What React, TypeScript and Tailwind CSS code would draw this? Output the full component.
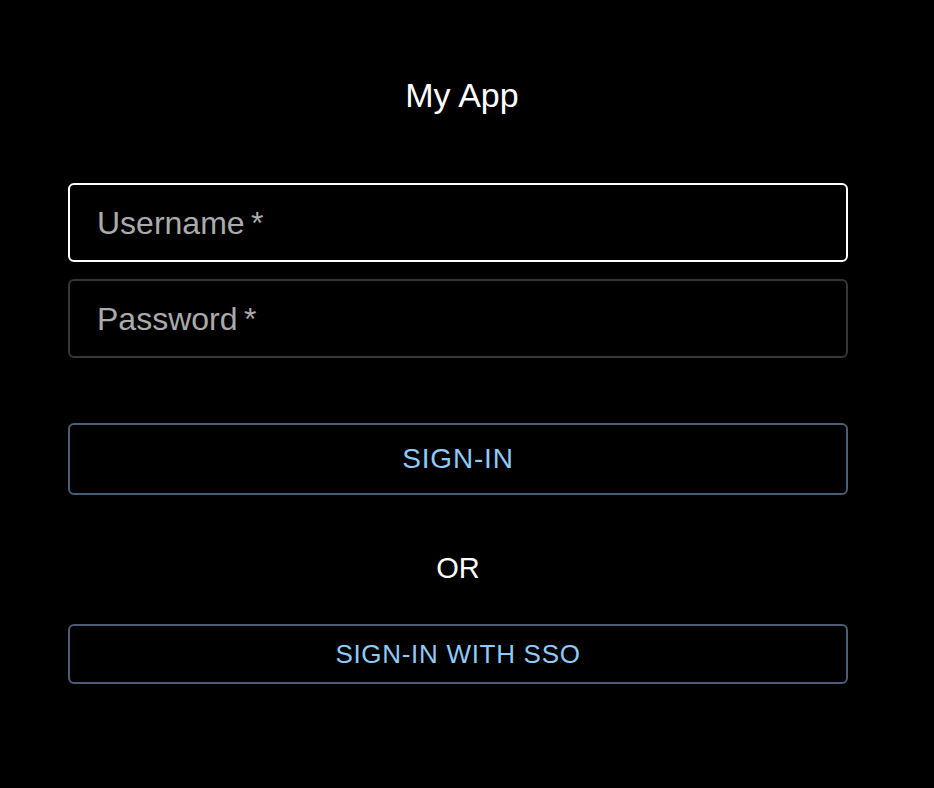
import React from 'react';

const font = { fontFamily: '"Liberation Sans", Arial, sans-serif' };

const Field = ({ label, focused }: { label: string; focused?: boolean }) => (
  <div
    className={
      focused
        ? 'h-[79px] rounded-[6px] border-2 border-white flex items-center pl-[27px]'
        : 'h-[79px] rounded-[6px] border-2 border-[#363636] flex items-center pl-[27px]'
    }
  >
    <span className="text-[32px] leading-none text-[#ababab]">
      {label}
      {'\u2009*'}
    </span>
  </div>
);

export default function App() {
  return (
    <div className="min-h-screen bg-black text-white" style={font}>
      <div className="ml-[68px] w-[780px] flex flex-col">
        {/* Title */}
        <h1 className="pt-[75px] pl-2 text-center text-[34px] leading-[40px] font-normal text-white">
          My App
        </h1>

        {/* Fields */}
        <div className="mt-[68px] flex flex-col gap-[17px]">
          <Field label="Username" focused />
          <Field label="Password" />
        </div>

        {/* Sign in */}
        <button className="mt-[65px] h-[72px] rounded-[6px] border-2 border-[#4a5d74] text-[#90caf9] text-[28px] tracking-[0.8px] uppercase">
          Sign-in
        </button>

        <div className="mt-[55px] h-[36px] leading-[36px] text-center text-[29px] text-white">
          OR
        </div>

        <button className="mt-[38px] h-[60px] rounded-[6px] border-2 border-[#4a5d74] text-[#90caf9] text-[26px] tracking-[0.7px] uppercase">
          Sign-in with SSO
        </button>
      </div>
    </div>
  );
}
